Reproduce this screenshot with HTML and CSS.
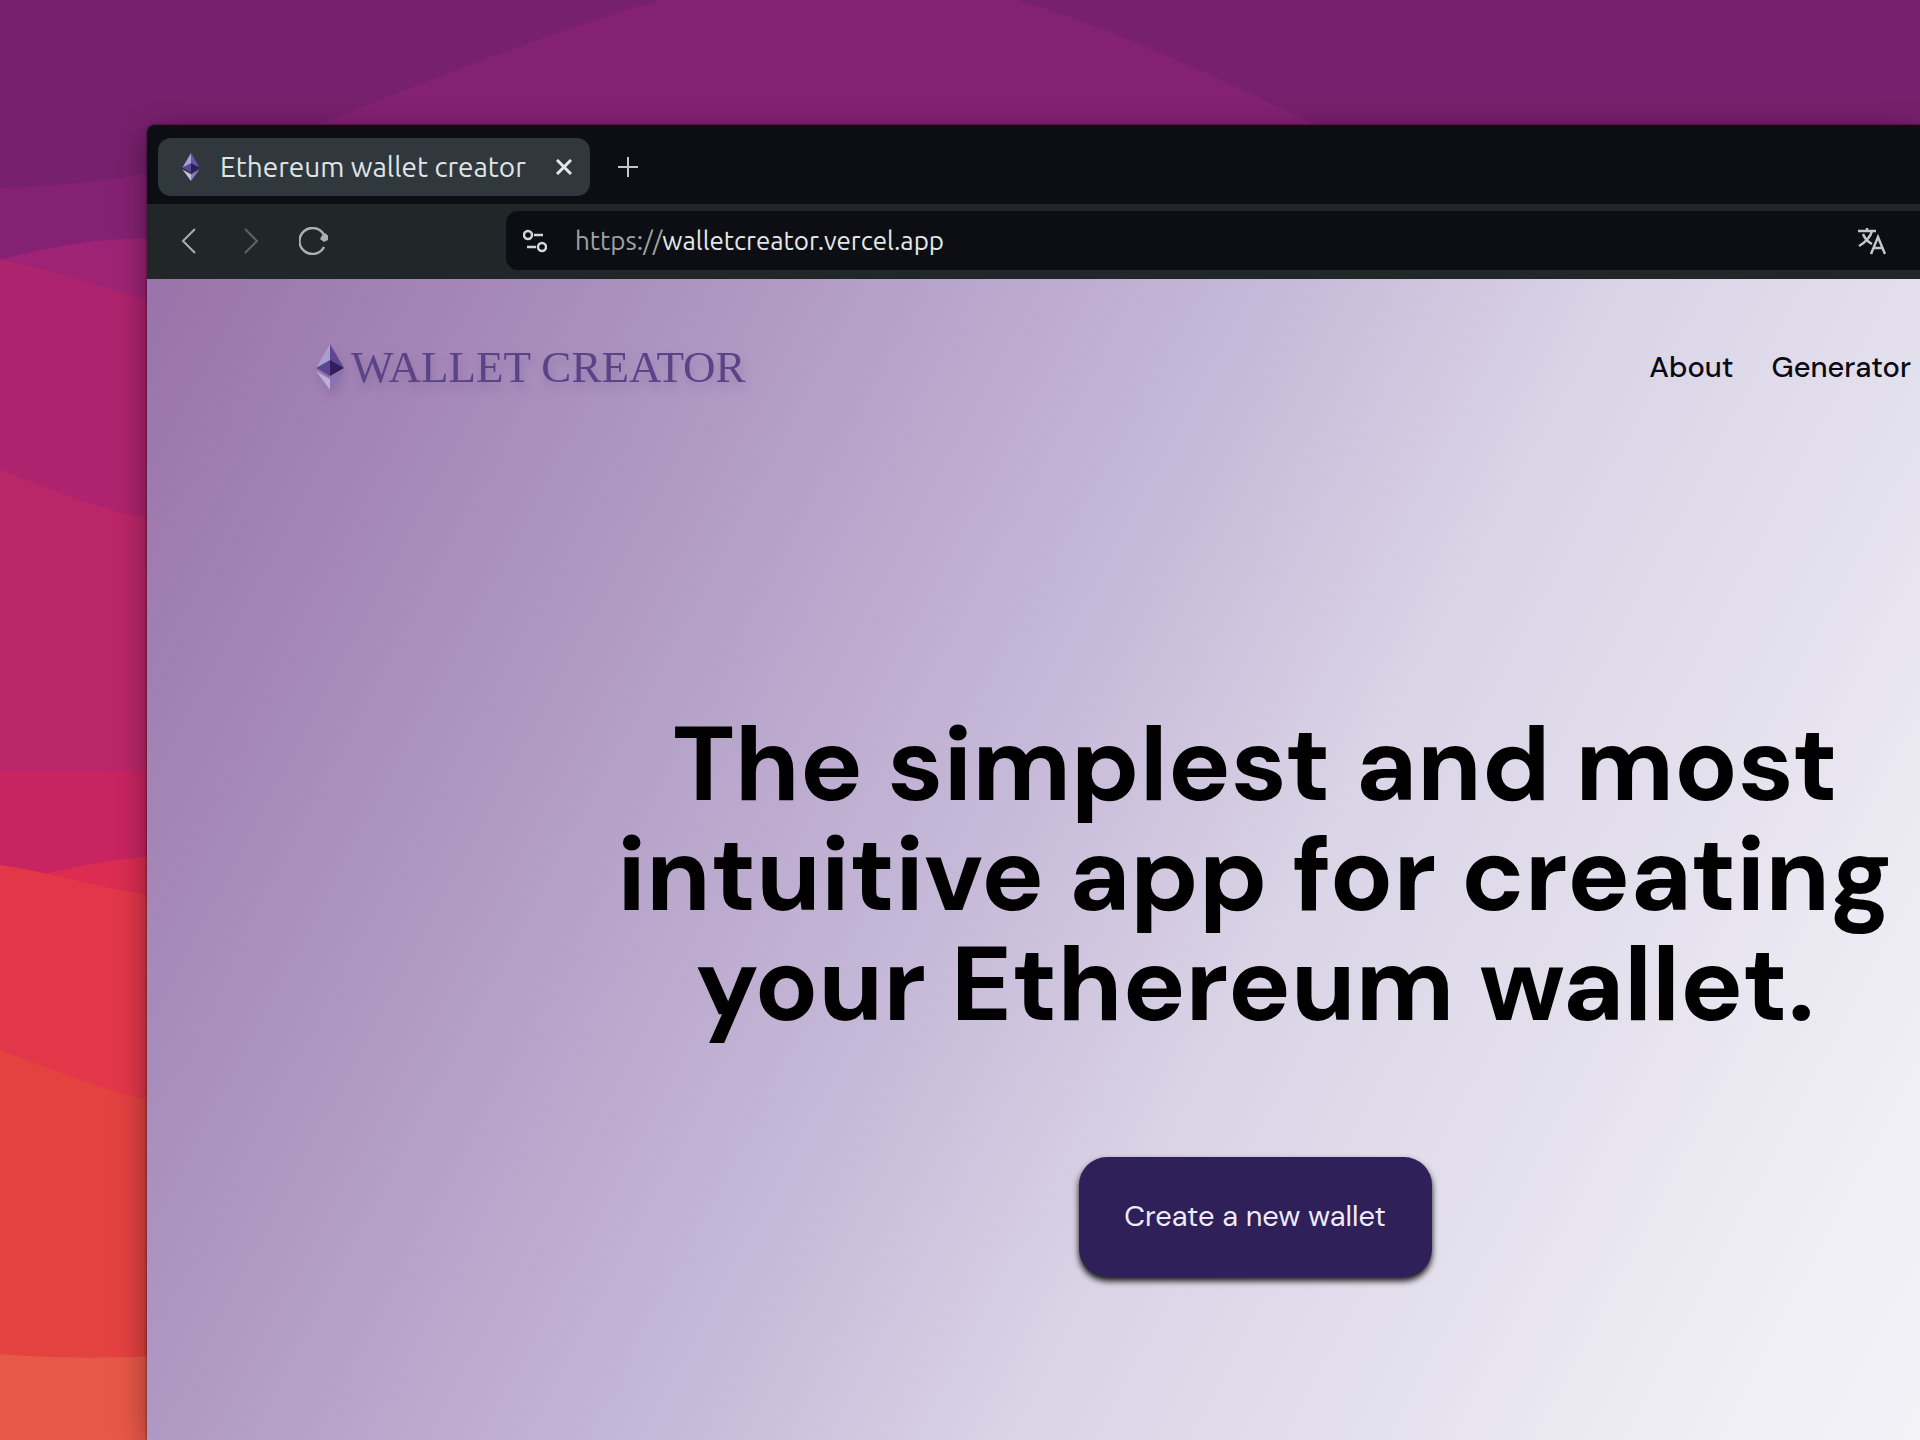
FILE: index.html
```html
<!DOCTYPE html>
<html lang="en">
<head>
<meta charset="utf-8">
<meta name="viewport" content="width=device-width, initial-scale=1">
<title>Ethereum wallet creator</title>
<link rel="stylesheet" href="styles.css">
</head>
<body>
<svg class="wallpaper" viewBox="0 0 1920 1440" preserveAspectRatio="xMinYMin slice" aria-hidden="true">
  <rect width="1920" height="1440" fill="#77206d"/>
  <path fill="#842173" d="M0 188C90 186 200 172 335 118C480 60 600 14 700-10H980C1100 20 1200 70 1320 127V1440H0Z"/>
  <path fill="#9e2375" d="M0 260C50 246 90 239 160 238V1440H0Z"/>
  <path fill="#ae236d" d="M0 259C50 270 100 285 160 305V1440H0Z"/>
  <path fill="#bb2669" d="M0 470C50 488 100 512 160 520V1440H0Z"/>
  <path fill="#c82461" d="M0 771H160V1440H0Z"/>
  <path fill="#dc2c50" d="M0 880L48 873C80 866 110 860 160 855V1440H0Z"/>
  <path fill="#e23748" d="M0 865C50 872 100 888 160 897V1440H0Z"/>
  <path fill="#e44141" d="M0 1050C50 1068 100 1090 160 1103V1440H0Z"/>
  <path fill="#e85848" d="M0 1354C60 1359 110 1358 160 1356V1440H0Z"/>
</svg>
<div class="window">
  <div class="tabstrip">
    <div class="tab">
      <svg class="tab-icon" viewBox="0 0 28 46" aria-hidden="true">
        <path fill="#a99fd6" d="M14 0L0 24L14 18Z"/><path fill="#6a55a4" d="M14 0L28 24L14 18Z"/>
        <path fill="#5a459a" d="M14 17L0 24L14 32Z"/><path fill="#2c1c66" d="M14 17L28 24L14 32Z"/>
        <path fill="#c9c0ea" d="M0 27L14 35V46Z"/><path fill="#8b78c4" d="M28 27L14 35V46Z"/>
      </svg>
      <span class="tab-title">Ethereum wallet creator</span>
      <button class="icon-button" type="button" aria-label="Close tab">
        <svg width="16" height="16" viewBox="0 0 16 16" stroke="#e4e8ea" stroke-width="3"><path d="M1 1L15 15M15 1L1 15"/></svg>
      </button>
    </div>
    <button class="icon-button" type="button" aria-label="New tab">
      <svg width="20" height="20" viewBox="0 0 20 20" stroke="#c4c7c9" stroke-width="2"><path d="M10 0V20M0 10H20"/></svg>
    </button>
  </div>
  <div class="toolbar">
    <div class="history">
      <button class="icon-button" type="button" aria-label="Back">
        <svg width="28" height="28" viewBox="0 0 28 28" fill="none" stroke="#a9aeae" stroke-width="2"><path d="M20 2L8 14L20 26"/></svg>
      </button>
      <button class="icon-button" type="button" aria-label="Forward">
        <svg width="28" height="28" viewBox="0 0 28 28" fill="none" stroke="#5d6364" stroke-width="2"><path d="M8 2L20 14L8 26"/></svg>
      </button>
      <button class="icon-button" type="button" aria-label="Reload">
        <svg width="30" height="28" viewBox="0 0 30 28" fill="none" stroke="#a9aeae" stroke-width="2.500"><path d="M25 20A13 13 0 1 1 25 8"/><path d="M23 8.500L26 6L29 8.500V13L25 15L21 12Z" fill="#a9aeae" stroke="none"/></svg>
      </button>
    </div>
    <div class="address">
      <svg width="24" height="24" viewBox="0 0 24 24" fill="none" stroke="#d4d7d9" stroke-width="2.500" aria-hidden="true">
        <circle cx="5" cy="6" r="4"/><path d="M11 6H20M4 18H13"/><circle cx="19" cy="18" r="4"/>
      </svg>
      <span class="url"><span class="scheme">https://</span>walletcreator.vercel.app</span>
      <button class="icon-button" type="button" aria-label="Translate">
        <svg width="28" height="28" viewBox="0 0 28 28" fill="none" stroke="#c4c7c9" stroke-width="2.500"><path d="M0 4H18M9 1V4M14 4C13 9 7 16 1 19M5 7C7 12 10 15 14 17M13 27L20 10L27 27M15 21H25"/></svg>
      </button>
    </div>
  </div>
  <div class="page">
    <header class="site-header">
      <a class="brand" href="#">
        <svg class="brand-icon" viewBox="0 0 28 46" aria-hidden="true">
          <path fill="#a79fd0" d="M14 0L0 24L14 17Z"/><path fill="#5d4791" d="M14 0L28 24L14 17Z"/>
          <path fill="#5b4694" d="M14 16L0 24L14 32Z"/><path fill="#301f5c" d="M14 16L28 24L14 32Z"/>
          <path fill="#b9afd8" d="M0 27L14 35V46Z"/><path fill="#8873b4" d="M28 27L14 35V46Z"/>
        </svg>
        <span>WALLET CREATOR</span>
      </a>
      <nav class="links">
        <a href="#about">About</a>
        <a href="#generator">Generator</a>
      </nav>
    </header>
    <main class="hero">
      <h1>The simplest and most<br>intuitive app for creating<br>your Ethereum wallet.</h1>
      <button class="cta" type="button">Create a new wallet</button>
    </main>
  </div>
</div>
</body>
</html>
```
FILE: styles.css
```css
* {
  box-sizing: border-box;
}

body {
  margin: 0;
  min-height: 100vh;
  display: flex;
  padding: 125px 0 0 147px;
  overflow: hidden;
  font-family: "DM Sans", Inter, sans-serif;
  color: #000;
}

.wallpaper {
  position: absolute;
  inset: 0;
  width: 100%;
  height: 100%;
  z-index: -1;
}

.window {
  flex: 1;
  min-width: 0;
  display: flex;
  flex-direction: column;
  border-radius: 8px 0 0 0;
  box-shadow: 0 8px 32px rgba(0, 0, 0, 0.4), 0 0 3px rgba(0, 0, 0, 0.6);
  overflow: hidden;
}

.icon-button {
  display: flex;
  padding: 0;
  border: 0;
  background: none;
}

.tabstrip {
  display: flex;
  align-items: center;
  gap: 28px;
  height: 79px;
  padding: 4px 11px 0;
  background: #0c0e13;
  font-family: Ubuntu, "Noto Sans", sans-serif;
}

.tab {
  display: flex;
  align-items: center;
  width: 432px;
  height: 58px;
  padding: 0 18px 0 24px;
  border-radius: 13px;
  background: #31383d;
  color: #dfe4e6;
}

.tab-icon {
  width: 18px;
  height: 28px;
}

.tab-title {
  flex: 1;
  padding-left: 20px;
  font-size: 28px;
  line-height: 32px;
  white-space: nowrap;
}

.toolbar {
  display: flex;
  align-items: center;
  height: 75px;
  padding: 0 0 2px 28px;
  background: #212729;
  font-family: Ubuntu, "Noto Sans", sans-serif;
}

.history {
  display: flex;
  gap: 34px;
  width: 331px;
}

.address {
  flex: 1;
  display: flex;
  align-items: center;
  gap: 28px;
  height: 59px;
  padding: 0 34px 0 17px;
  border-radius: 12px 0 0 12px;
  background: #0c0e13;
}

.url {
  flex: 1;
  font-size: 26px;
  line-height: 32px;
  color: #e4e7e9;
}

.scheme {
  color: #9ea2a6;
}

.page {
  flex: 1;
  background: linear-gradient(118deg, #9973a9 0%, #ab93bf 22%, #c7bad9 48%, #dad4e6 62%, #e4e1ee 77%, #f0eff5 92%, #f3f2f7 100%);
}

.site-header {
  display: flex;
  align-items: center;
  justify-content: space-between;
  height: 176px;
  padding: 0 9px 0 169px;
}

.brand {
  display: flex;
  align-items: center;
  gap: 7px;
  font-family: "Liberation Serif", serif;
  font-size: 45px;
  line-height: 48px;
  color: #5a4387;
  text-decoration: none;
  filter: drop-shadow(2px 6px 5px rgba(60, 30, 100, 0.2));
}

.brand-icon {
  width: 28px;
  height: 46px;
}

.links {
  display: flex;
  gap: 38px;
  font-size: 29px;
  font-weight: 500;
  line-height: 32px;
}

.links a {
  color: #0b0912;
  text-decoration: none;
}

.hero {
  display: flex;
  flex-direction: column;
  align-items: center;
  gap: 117px;
  padding: 255px 0 0 443px;
}

h1 {
  margin: 0;
  font-size: 105px;
  font-weight: 700;
  line-height: 110px;
  text-align: center;
  white-space: nowrap;
}

.cta {
  width: 353px;
  height: 120px;
  padding: 0 0 2px;
  border: 0;
  border-radius: 28px;
  background: #30205a;
  box-shadow: 0 4px 6px rgba(0, 0, 0, 0.9);
  font-family: inherit;
  font-size: 29px;
  line-height: 32px;
  color: #eeeaf8;
}
```
